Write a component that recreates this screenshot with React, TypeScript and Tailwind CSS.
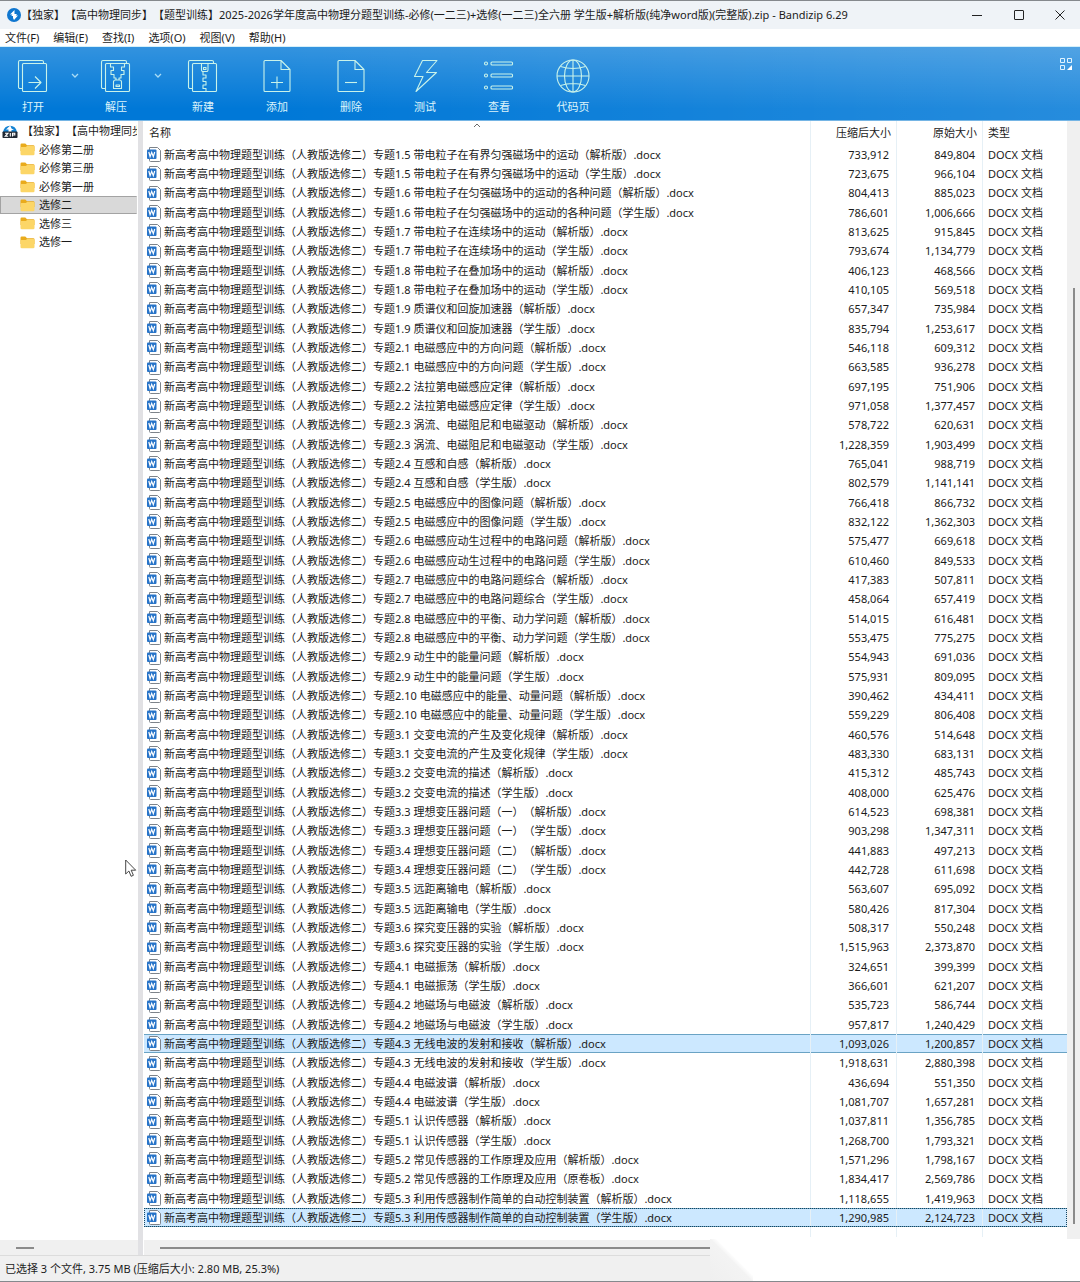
import React from "react";

type FileRow = [name: string, packed: string, original: string];

const PREFIX = "新高考高中物理题型训练（人教版选修二）专题";

const FILES: FileRow[] = [
  ["1.5 带电粒子在有界匀强磁场中的运动（解析版）", "733,912", "849,804"],
  ["1.5 带电粒子在有界匀强磁场中的运动（学生版）", "723,675", "966,104"],
  ["1.6 带电粒子在匀强磁场中的运动的各种问题（解析版）", "804,413", "885,023"],
  ["1.6 带电粒子在匀强磁场中的运动的各种问题（学生版）", "786,601", "1,006,666"],
  ["1.7 带电粒子在连续场中的运动（解析版）", "813,625", "915,845"],
  ["1.7 带电粒子在连续场中的运动（学生版）", "793,674", "1,134,779"],
  ["1.8 带电粒子在叠加场中的运动（解析版）", "406,123", "468,566"],
  ["1.8 带电粒子在叠加场中的运动（学生版）", "410,105", "569,518"],
  ["1.9 质谱仪和回旋加速器（解析版）", "657,347", "735,984"],
  ["1.9 质谱仪和回旋加速器（学生版）", "835,794", "1,253,617"],
  ["2.1 电磁感应中的方向问题（解析版）", "546,118", "609,312"],
  ["2.1 电磁感应中的方向问题（学生版）", "663,585", "936,278"],
  ["2.2 法拉第电磁感应定律（解析版）", "697,195", "751,906"],
  ["2.2 法拉第电磁感应定律（学生版）", "971,058", "1,377,457"],
  ["2.3 涡流、电磁阻尼和电磁驱动（解析版）", "578,722", "620,631"],
  ["2.3 涡流、电磁阻尼和电磁驱动（学生版）", "1,228,359", "1,903,499"],
  ["2.4 互感和自感（解析版）", "765,041", "988,719"],
  ["2.4 互感和自感（学生版）", "802,579", "1,141,141"],
  ["2.5 电磁感应中的图像问题（解析版）", "766,418", "866,732"],
  ["2.5 电磁感应中的图像问题（学生版）", "832,122", "1,362,303"],
  ["2.6 电磁感应动生过程中的电路问题（解析版）", "575,477", "669,618"],
  ["2.6 电磁感应动生过程中的电路问题（学生版）", "610,460", "849,533"],
  ["2.7 电磁感应中的电路问题综合（解析版）", "417,383", "507,811"],
  ["2.7 电磁感应中的电路问题综合（学生版）", "458,064", "657,419"],
  ["2.8 电磁感应中的平衡、动力学问题（解析版）", "514,015", "616,481"],
  ["2.8 电磁感应中的平衡、动力学问题（学生版）", "553,475", "775,275"],
  ["2.9 动生中的能量问题（解析版）", "554,943", "691,036"],
  ["2.9 动生中的能量问题（学生版）", "575,931", "809,095"],
  ["2.10 电磁感应中的能量、动量问题（解析版）", "390,462", "434,411"],
  ["2.10 电磁感应中的能量、动量问题（学生版）", "559,229", "806,408"],
  ["3.1 交变电流的产生及变化规律（解析版）", "460,576", "514,648"],
  ["3.1 交变电流的产生及变化规律（学生版）", "483,330", "683,131"],
  ["3.2 交变电流的描述（解析版）", "415,312", "485,743"],
  ["3.2 交变电流的描述（学生版）", "408,000", "625,476"],
  ["3.3 理想变压器问题（一）（解析版）", "614,523", "698,381"],
  ["3.3 理想变压器问题（一）（学生版）", "903,298", "1,347,311"],
  ["3.4 理想变压器问题（二）（解析版）", "441,883", "497,213"],
  ["3.4 理想变压器问题（二）（学生版）", "442,728", "611,698"],
  ["3.5 远距离输电（解析版）", "563,607", "695,092"],
  ["3.5 远距离输电（学生版）", "580,426", "817,304"],
  ["3.6 探究变压器的实验（解析版）", "508,317", "550,248"],
  ["3.6 探究变压器的实验（学生版）", "1,515,963", "2,373,870"],
  ["4.1 电磁振荡（解析版）", "324,651", "399,399"],
  ["4.1 电磁振荡（学生版）", "366,601", "621,207"],
  ["4.2 地磁场与电磁波（解析版）", "535,723", "586,744"],
  ["4.2 地磁场与电磁波（学生版）", "957,817", "1,240,429"],
  ["4.3 无线电波的发射和接收（解析版）", "1,093,026", "1,200,857"],
  ["4.3 无线电波的发射和接收（学生版）", "1,918,631", "2,880,398"],
  ["4.4 电磁波谱（解析版）", "436,694", "551,350"],
  ["4.4 电磁波谱（学生版）", "1,081,707", "1,657,281"],
  ["5.1 认识传感器（解析版）", "1,037,811", "1,356,785"],
  ["5.1 认识传感器（学生版）", "1,268,700", "1,793,321"],
  ["5.2 常见传感器的工作原理及应用（解析版）", "1,571,296", "1,798,167"],
  ["5.2 常见传感器的工作原理及应用（原卷板）", "1,834,417", "2,569,786"],
  ["5.3 利用传感器制作简单的自动控制装置（解析版）", "1,118,655", "1,419,963"],
  ["5.3 利用传感器制作简单的自动控制装置（学生版）", "1,290,985", "2,124,723"],
];

const SELECTED = 46;
const FOCUSED = 55;

const MENUS = ["文件(F)", "编辑(E)", "查找(I)", "选项(O)", "视图(V)", "帮助(H)"];
const FOLDERS = ["必修第二册", "必修第三册", "必修第一册", "选修二", "选修三", "选修一"];

function ToolSvg({ children }: { children: React.ReactNode }) {
  return (
    <svg viewBox="0 0 34 34" className="size-[34px]" fill="none" stroke="#c9f3ea" strokeWidth="1.1" strokeLinejoin="round" aria-hidden="true">
      {children}
    </svg>
  );
}

const Sheets = () => (
  <>
    <path d="M6.5 29.5H4a1.5 1.5 0 0 1-1.5-1.5V3A1.5 1.5 0 0 1 4 1.500H26a1.500 1.500 0 0 1 1.500 1.500V4.500" />
    <rect x="6.500" y="4.500" width="24" height="28" rx="1" />
  </>
);

const OpenIcon = () => (
  <ToolSvg>
    <Sheets />
    <path d="M12.500 23.500H24.500M19 17.500l6 6-6 6" />
  </ToolSvg>
);

const ExtractIcon = () => (
  <ToolSvg>
    <Sheets />
    <path d="M11.500 4.500V8h3v3.500h-2.500v4h3V19h2v2M25.500 4.500V8h-3v3.500h2.500v4h-3V19h-2v2" />
    <path d="M14.500 29.500V23a2 2 0 0 1 2-2h4a2 2 0 0 1 2 2v6.500zM17 26h3.500v1.500H17z" />
  </ToolSvg>
);

const NewIcon = () => (
  <ToolSvg>
    <Sheets />
    <path d="M15.500 4.500v6.500a1.500 1.500 0 0 0 1.500 1.500h3.500a1.500 1.500 0 0 0 1.500-1.500V4.500M17.500 8.500h2.500v2h-2.500z" />
    <path d="M17 12.500V16h3v3h-3v3.500h3V26h-3v3.500h3v3" />
  </ToolSvg>
);

const PageOutline = () => (
  <path d="M21 1.500H5A1 1 0 0 0 4 2.500V31.500a1 1 0 0 0 1 1H29a1 1 0 0 0 1-1V10.500zM21 1.500V10.500H30" />
);

const AddIcon = () => (
  <ToolSvg>
    <PageOutline />
    <path d="M11 23.500H23M17 17.500v12" />
  </ToolSvg>
);

const DeleteIcon = () => (
  <ToolSvg>
    <PageOutline />
    <path d="M11 23.500H23" />
  </ToolSvg>
);

const TestIcon = () => (
  <ToolSvg>
    <path d="M14.500 1.500H29L18.500 13.500H28.500L8 32.500 15 17.500H6.500z" />
  </ToolSvg>
);

const ViewIcon = () => (
  <ToolSvg>
    {[4.5, 16.5, 28.5].map((y) => (
      <g key={y}>
        <circle cx="4" cy={y} r="1.500" />
        <rect x="9" y={y - 1.5} width="21.500" height="3" rx="1" />
      </g>
    ))}
  </ToolSvg>
);

const CodePageIcon = () => (
  <ToolSvg>
    <circle cx="17" cy="17" r="16" />
    <ellipse cx="17" cy="17" rx="8.500" ry="16" />
    <path d="M17 1V33M1 17H33M4.500 7.500Q17 11.500 29.500 7.500M4.500 26.500Q17 22.500 29.500 26.500" />
  </ToolSvg>
);

function Tool({ label, narrow, children }: { label: string; narrow?: boolean; children: React.ReactNode }) {
  return (
    <button type="button" className={`flex h-full shrink-0 flex-col items-center gap-1.5 pt-3 text-[#dcf4fb] ${narrow ? "w-[66px]" : "w-[74px]"}`}>
      {children}
      <span className="leading-4">{label}</span>
    </button>
  );
}

function MoreButton({ label }: { label: string }) {
  return (
    <button type="button" aria-label={label} className="flex w-[17px] shrink-0 justify-center pt-[26px]">
      <svg viewBox="0 0 8 6" className="h-[6px] w-2" fill="none" stroke="#a9dcf5" strokeWidth="1.300">
        <path d="M1 1l3 3 3-3" />
      </svg>
    </button>
  );
}

const AppLogo = () => (
  <svg viewBox="0 0 14 14" className="size-[14px] shrink-0" aria-hidden="true">
    <circle cx="7" cy="7" r="7" fill="#0f76cf" />
    <path d="M7.500 2L3 6.500h2.300L4.300 8H6v2l1 2 4-4.500H8.800L10 6H7.500z" fill="#fff" />
  </svg>
);

const ZipIcon = () => (
  <svg viewBox="0 0 16 16" className="size-4 shrink-0" aria-hidden="true">
    <path d="M1 9a7.200 8 0 0 1 14 0z" fill="#1583d3" />
    <path d="M8.300 2.500L4 6.500h2.500V9h3V7H12L9.500 5.500z" fill="#fff" />
    <rect x="0.500" y="8.500" width="15" height="6.500" rx="0.800" fill="#202833" />
    <path d="M3 10.200h3L3.200 13.300H6.200M8.300 10v3.600M10.500 13.600V10.200h2.300v1.800h-2.300" fill="none" stroke="#fff" strokeWidth="1.100" />
  </svg>
);

const FolderIcon = () => (
  <svg viewBox="0 0 15 13" className="h-[13px] w-[15px] shrink-0" aria-hidden="true">
    <path d="M0.500 1.800A1.200 1.200 0 0 1 1.700 0.600H5.300L7 2.300H13.300A1.200 1.200 0 0 1 14.500 3.500V8H0.500z" fill="#e9ab1c" />
    <path d="M0.500 5A1 1 0 0 1 1.500 4H5.700L7.200 2.900H13.500A1 1 0 0 1 14.500 3.900V11A1.300 1.300 0 0 1 13.200 12.300H1.800A1.300 1.300 0 0 1 0.500 11z" fill="#fcd667" />
  </svg>
);

const DocIcon = () => (
  <svg viewBox="0 0 14 15" className="h-[15px] w-[14px] shrink-0" aria-hidden="true">
    <path d="M2.500 0.500H10.500L13.500 3.500V13.500a1 1 0 0 1-1 1H3.500a1 1 0 0 1-1-1z" fill="#fff" stroke="#7d838a" />
    <rect x="0" y="2.500" width="9.500" height="9.500" rx="1" fill="#2673c8" />
    <path d="M1.800 5l1.300 4.600L4.700 5.400 6.300 9.600 7.700 5" fill="none" stroke="#fff" strokeWidth="1.200" />
  </svg>
);

const LINE = "border-l border-[#e6f0f6]";
const HIGHLIGHT = "bg-[#cce8ff] shadow-[inset_0_1px_0_#6aa3c4,inset_0_-1px_0_#6aa3c4]";

function FileTable() {
  return (
    <table className="w-full table-fixed border-separate border-spacing-0 whitespace-nowrap">
      <colgroup>
        <col />
        <col className="w-[86px]" />
        <col className="w-[86px]" />
        <col className="w-[85px]" />
      </colgroup>
      <thead>
        <tr className="h-6 leading-4">
          <th scope="col" className="relative p-0 pl-[5px] text-left font-normal">
            名称
            <svg viewBox="0 0 8 5" className="absolute top-[2px] left-1/2 h-[5px] w-2 -translate-x-1/2" fill="none" stroke="#6b6b6b" aria-hidden="true">
              <path d="M1 4l3-3 3 3" />
            </svg>
          </th>
          <th scope="col" className={`p-0 pr-[5px] text-right font-normal ${LINE}`}>压缩后大小</th>
          <th scope="col" className={`p-0 pr-[5px] text-right font-normal ${LINE}`}>原始大小</th>
          <th scope="col" className={`p-0 pl-[5px] text-left font-normal ${LINE}`}>类型</th>
        </tr>
      </thead>
      <tbody>
        {FILES.map(([name, packed, original], i) => {
          const hot = i === SELECTED || i === FOCUSED;
          const cell = hot ? HIGHLIGHT : "";
          return (
            <tr
              key={name}
              aria-selected={hot}
              className={`h-[19px] leading-4 nth-[3n]:h-5 ${i === FOCUSED ? "outline-1 -outline-offset-1 outline-[#17455f] outline-dotted" : ""}`}
            >
              <td className={`p-0 ${cell}`}>
                <div className="flex items-center gap-[3px] pl-[3px]">
                  <DocIcon />
                  <span>{PREFIX + name + ".docx"}</span>
                </div>
              </td>
              <td className={`p-0 pr-[7px] text-right ${LINE} ${cell}`}>{packed}</td>
              <td className={`p-0 pr-[7px] text-right ${LINE} ${cell}`}>{original}</td>
              <td className={`p-0 pl-[5px] ${LINE} ${cell}`}>DOCX 文档</td>
            </tr>
          );
        })}
      </tbody>
      <tfoot aria-hidden="true">
        <tr className="h-[10px]">
          <td className="p-0" />
          <td className={`p-0 ${LINE}`} />
          <td className={`p-0 ${LINE}`} />
          <td className={`p-0 ${LINE}`} />
        </tr>
      </tfoot>
    </table>
  );
}

export default function App() {
  return (
    <div className="relative flex min-h-screen flex-col overflow-hidden border-y border-[#85898d] bg-white font-['Noto_Sans','Noto_Sans_CJK_SC',sans-serif] text-[11px] text-[#1b1b1b] [text-spacing-trim:space-all]">
      <header className="flex h-7 items-center bg-[#eff3f7] pl-[7px]">
        <AppLogo />
        <h1 className="min-w-0 flex-1 truncate leading-4">
          【独家】【高中物理同步】【题型训练】2025-2026学年度高中物理分题型训练-必修(一二三)+选修(一二三)全六册 学生版+解析版(纯净word版)(完整版).zip - Bandizip 6.29
        </h1>
        <div className="flex h-full text-[#222]">
          <button type="button" aria-label="最小化" className="flex w-[42px] items-center justify-center">
            <svg viewBox="0 0 10 10" className="size-[10px]" stroke="currentColor" fill="none"><path d="M0 5.500H10" /></svg>
          </button>
          <button type="button" aria-label="最大化" className="flex w-[42px] items-center justify-center">
            <svg viewBox="0 0 10 10" className="size-[10px]" stroke="currentColor" fill="none"><rect x="0.500" y="0.500" width="9" height="9" rx="0.500" /></svg>
          </button>
          <button type="button" aria-label="关闭" className="flex w-[40px] items-center justify-center">
            <svg viewBox="0 0 10 10" className="size-[10px]" stroke="currentColor" fill="none"><path d="M0.500 0.500l9 9M9.500 0.500l-9 9" /></svg>
          </button>
        </div>
      </header>

      <nav aria-label="菜单" className="flex h-[17px] gap-[14px] pl-[5px]">
        {MENUS.map((m) => (
          <button key={m} type="button" className="leading-4">{m}</button>
        ))}
      </nav>

      <div role="toolbar" aria-label="工具栏" className="flex h-[75px] items-stretch border-t border-b border-t-[#d5f0fa] border-b-[#75b5e5] bg-[#0078d7] bg-[linear-gradient(to_bottom,rgba(255,255,255,0.2),transparent_85%),linear-gradient(to_right,transparent_25%,rgba(255,255,255,0.15))]">
        <Tool label="打开" narrow><OpenIcon /></Tool>
        <MoreButton label="打开选项" />
        <Tool label="解压" narrow><ExtractIcon /></Tool>
        <MoreButton label="解压选项" />
        <Tool label="新建"><NewIcon /></Tool>
        <Tool label="添加"><AddIcon /></Tool>
        <Tool label="删除"><DeleteIcon /></Tool>
        <Tool label="测试"><TestIcon /></Tool>
        <Tool label="查看"><ViewIcon /></Tool>
        <Tool label="代码页"><CodePageIcon /></Tool>
        <button type="button" aria-label="布局" className="mt-[11px] mr-2 ml-auto self-start">
          <svg viewBox="0 0 12 12" className="size-3" fill="none" stroke="#e0f3ff" aria-hidden="true">
            <path d="M0.500 0.500h4v4h-4zM7.500 0.500h4v4h-4zM0.500 7.500h4v4h-4z" />
            <path d="M12 7v5H7z" fill="#fff" stroke="none" />
          </svg>
        </button>
      </div>

      <main className="flex flex-1">
        <aside className="flex w-[138px] shrink-0 flex-col">
          <ul className="flex-1 overflow-hidden pt-[1px] leading-4 whitespace-nowrap">
            <li className="flex h-[18px] w-[137px] items-center gap-1 overflow-hidden pl-[2px]">
              <ZipIcon />
              <span>【独家】【高中物理同步】</span>
            </li>
            {FOLDERS.map((f, i) => (
              <li key={f} className="h-[18px] w-[137px] even:h-[19px]">
                <button
                  type="button"
                  className={`flex h-full w-full items-center gap-1 border pl-[19px] ${i === 3 ? "border-[#a3a3a3] border-r-[#d9d9d9] bg-[#d9d9d9]" : "border-transparent"}`}
                >
                  <FolderIcon />
                  <span>{f}</span>
                </button>
              </li>
            ))}
          </ul>
          <div className="flex h-[15px] items-center bg-[#f0f0f0] pl-4">
            <div className="h-[2px] w-[18px] bg-[#8b8b8b]" />
          </div>
        </aside>
        <div className="w-[5px] shrink-0 bg-[#e1e1e4]" />
        <section className="flex min-w-0 flex-1 flex-col pl-px">
          <div className="flex flex-1">
            <div className="min-w-0 flex-1">
              <FileTable />
            </div>
            <div className="flex w-[13px] justify-center bg-[#f0f0f0] pt-[167px]">
              <div className="mb-4 w-[2px] bg-[#8b8b8b]" />
            </div>
          </div>
          <div className="flex h-[15px] items-center bg-[#f0f0f0] px-4">
            <div className="h-[2px] flex-1 bg-[#8b8b8b]" />
          </div>
        </section>
      </main>

      <footer className="flex h-[26px] items-center border-t border-[#dcdcdc] bg-[#f0f0f0] pl-[5px]">
        <p className="leading-4">已选择 3 个文件, 3.75 MB (压缩后大小: 2.80 MB, 25.3%)</p>
      </footer>

      <div className="absolute right-0 -bottom-px flex h-[43px] w-[370px]">
        <div className="w-[43px] bg-[linear-gradient(to_top_right,#efefef,#f3f3f3_50%,#fff_58%)]" />
        <div className="flex-1 bg-white" />
      </div>

      <svg viewBox="0 0 12 19" className="absolute top-[858px] left-[125px] h-[19px] w-3" aria-hidden="true">
        <path d="M0.700 1V15l3.200-3 2.200 5.300 2.300-1L6.200 11.200H10.700z" fill="#fff" stroke="#333" strokeWidth="0.900" />
      </svg>
    </div>
  );
}
